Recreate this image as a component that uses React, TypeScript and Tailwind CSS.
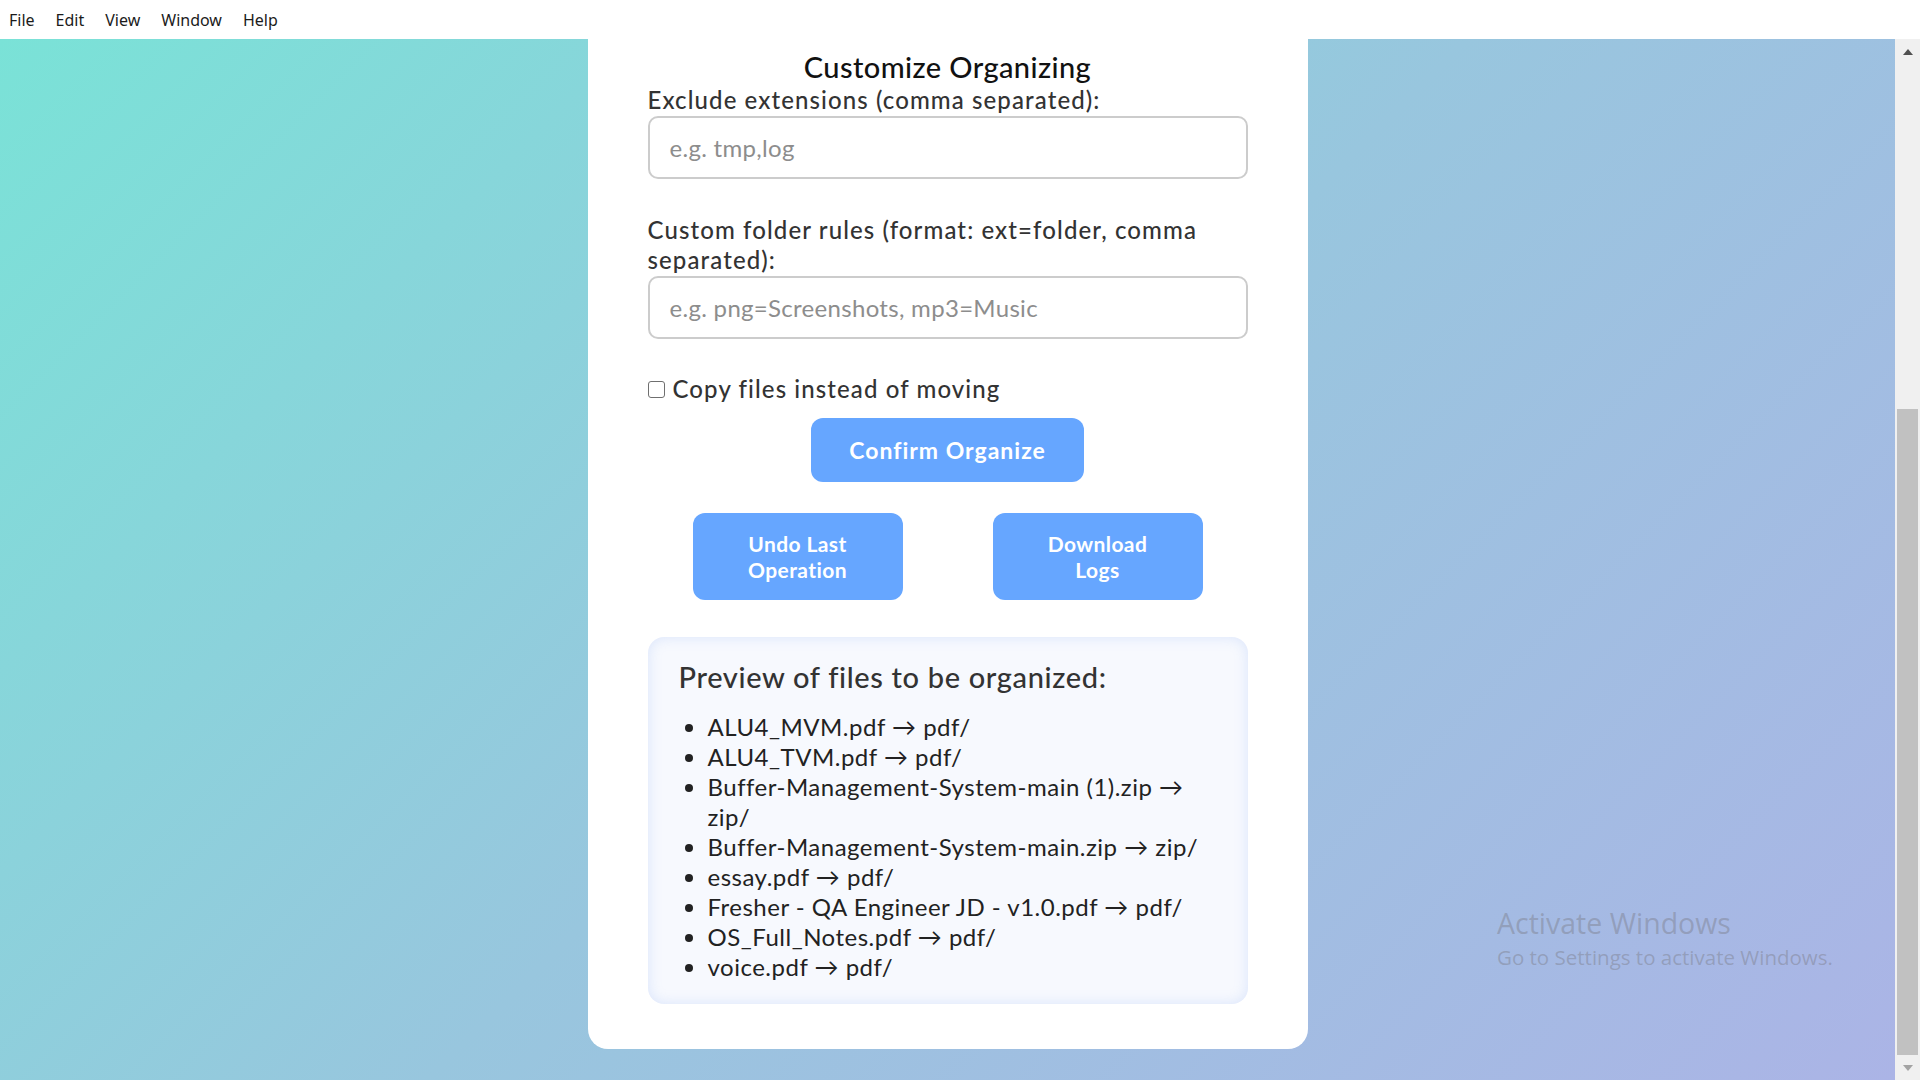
import React from "react";

const files = [
  "ALU4_MVM.pdf → pdf/",
  "ALU4_TVM.pdf → pdf/",
  "Buffer-Management-System-main (1).zip → zip/",
  "Buffer-Management-System-main.zip → zip/",
  "essay.pdf → pdf/",
  "Fresher - QA Engineer JD - v1.0.pdf → pdf/",
  "OS_Full_Notes.pdf → pdf/",
  "voice.pdf → pdf/",
];

export default function App() {
  return (
    <div className="w-[1920px] h-[1080px] flex flex-col overflow-hidden relative bg-white">
      {/* menu bar */}
      <div
        className="h-[39px] shrink-0 bg-white flex items-center gap-[21px] pl-[9px] text-[16px] text-[#1b1b1b]"
        style={{ fontFamily: '"Noto Sans", "Open Sans", sans-serif' }}
      >
        <span>File</span>
        <span>Edit</span>
        <span>View</span>
        <span>Window</span>
        <span>Help</span>
      </div>

      <div className="flex-1 flex min-h-0">
        {/* page content */}
        <div
          className="flex-1 flex justify-center items-start overflow-hidden bg-[linear-gradient(135deg,#7ae2d7_0%,#98c6de_50%,#abb4e6_100%)]"
          style={{ fontFamily: 'Lato, "Open Sans", sans-serif' }}
        >
          <div className="w-[720px] bg-white rounded-b-[20px] px-[60px] pt-[11px] pb-[45px] flex flex-col">
            <h2 className="text-center text-[29px] leading-[34px] font-medium text-[#111] tracking-[0.4px]">
              Customize Organizing
            </h2>
            <label className="mt-[1px] text-[24px] leading-[30px] text-[#333] font-medium tracking-[1.1px]">
              Exclude extensions (comma separated):
            </label>
            <div className="mt-[1px] h-[63px] rounded-[10px] border-2 border-[#cccccc] flex items-center px-[20px] text-[24px] text-[#8d8d8d] tracking-[0.3px]">
              e.g. tmp,log
            </div>

            <label className="mt-[36px] text-[24px] leading-[30px] text-[#333] font-medium tracking-[1.1px]">
              Custom folder rules (format: ext=folder, comma separated):
            </label>
            <div className="mt-[1px] h-[63px] rounded-[10px] border-2 border-[#cccccc] flex items-center px-[20px] text-[24px] text-[#8d8d8d] tracking-[0.3px]">
              e.g. png=Screenshots, mp3=Music
            </div>

            <div className="mt-[35px] h-[30px] flex items-center">
              <span className="w-[17px] h-[17px] rounded-[3px] border-[1.5px] border-[#6f6f6f] bg-white shrink-0" />
              <span className="ml-[8px] text-[24px] leading-[30px] text-[#333] font-medium tracking-[1.1px]">
                Copy files instead of moving
              </span>
            </div>

            <div className="mt-[14px] flex justify-center">
              <button className="w-[273px] h-[64px] rounded-[12px] bg-[#66a6ff] text-white text-[23px] font-bold tracking-[1px]">
                Confirm Organize
              </button>
            </div>

            <div className="mt-[31px] flex justify-center gap-[90px]">
              <button className="w-[210px] h-[87px] rounded-[12px] bg-[#66a6ff] text-white text-[21px] leading-[26px] font-bold px-[35px] tracking-[0.4px]">
                Undo Last Operation
              </button>
              <button className="w-[210px] h-[87px] rounded-[12px] bg-[#66a6ff] text-white text-[21px] leading-[26px] font-bold px-[35px] tracking-[0.4px]">
                Download Logs
              </button>
            </div>

            <div className="mt-[37px] rounded-[16px] bg-[#f7f9fe] shadow-[inset_0_0_14px_rgba(120,160,240,0.22)] px-[30px] pt-[23px] pb-[22px]">
              <h3 className="text-[29px] leading-[34px] text-[#333] font-medium tracking-[0.65px] pl-[1px]">
                Preview of files to be organized:
              </h3>
              <ul className="mt-[18px] list-disc pl-[30px] text-[24px] leading-[30px] text-[#222] tracking-[0.5px]">
                {files.map((f) => (
                  <li key={f}>{f}</li>
                ))}
              </ul>
            </div>
          </div>
        </div>

        {/* scrollbar */}
        <div className="w-[25px] shrink-0 bg-[#f0f0f0] flex flex-col">
          <div className="h-[25px] flex items-center justify-center">
            <svg width="10" height="6" viewBox="0 0 10 6">
              <polygon points="5,0 10,6 0,6" fill="#505050" />
            </svg>
          </div>
          <div className="flex-1 flex flex-col justify-end">
            <div className="h-[646px] mx-[2px] bg-[#c1c1c1]" />
          </div>
          <div className="h-[25px] flex items-center justify-center">
            <svg width="10" height="6" viewBox="0 0 10 6">
              <polygon points="0,0 10,0 5,6" fill="#a3a3a3" />
            </svg>
          </div>
        </div>
      </div>

      {/* Activate Windows watermark */}
      <div
        className="absolute left-[1497px] top-[905px] text-[rgba(120,120,130,0.42)] pointer-events-none"
        style={{ fontFamily: '"Open Sans", "Noto Sans", sans-serif' }}
      >
        <div className="text-[28.5px] leading-[36px]">Activate Windows</div>
        <div className="text-[20.5px] leading-[28px] mt-[2px]">Go to Settings to activate Windows.</div>
      </div>
    </div>
  );
}
